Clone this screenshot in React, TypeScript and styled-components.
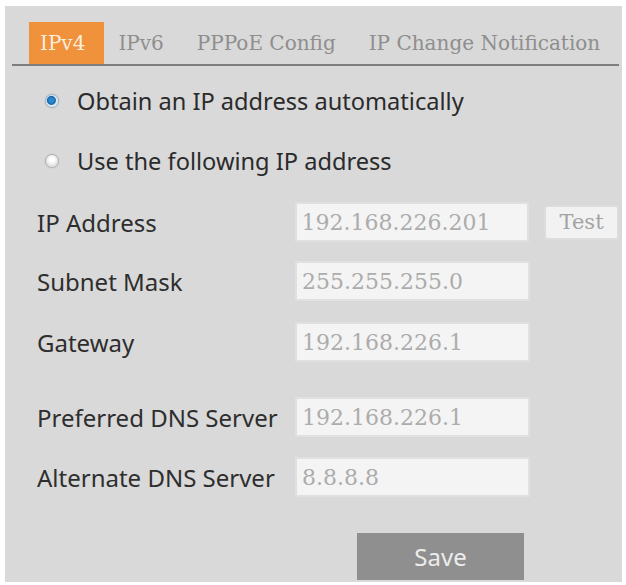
import React from 'react';
import styled, { createGlobalStyle } from 'styled-components';

const GlobalStyle = createGlobalStyle`
  html, body {
    margin: 0;
    padding: 0;
    background: #ffffff;
  }
`;

const Panel = styled.div`
  box-sizing: border-box;
  margin: 6px 0 0 5px;
  width: 617px;
  height: 576px;
  background-color: #d9d9d9;
  padding: 16px 3px 2px 7px;
  display: flex;
  flex-direction: column;
  font-family: 'Noto Sans', 'Open Sans', sans-serif;
  color: #2e2e2e;
`;

const TabBar = styled.div`
  display: flex;
  flex-direction: row;
  align-items: stretch;
  height: 42px;
  padding-left: 17px;
  border-bottom: 2px solid #7d7d7d;
`;

const Tab = styled.div<{ $active?: boolean }>`
  display: flex;
  align-items: center;
  padding: ${p => (p.$active ? '0 19px 0 11px' : '0')};
  margin-right: ${p => (p.$active ? '14px' : '33px')};
  background-color: ${p => (p.$active ? '#f0913b' : 'transparent')};
  color: ${p => (p.$active ? '#fbeedd' : '#8e8e8e')};
  font-family: 'DejaVu Serif', 'Liberation Serif', serif;
  font-size: 20px;
  white-space: nowrap;
  cursor: pointer;
`;

const RadioGroup = styled.div`
  display: flex;
  flex-direction: column;
  gap: 32px;
  padding: 21px 0 0 33px;
`;

const RadioRow = styled.label`
  display: flex;
  flex-direction: row;
  align-items: center;
  height: 28px;
  font-size: 23.6px;
  color: #2b2b2b;
`;

const RadioDot = styled.span<{ $checked?: boolean }>`
  box-sizing: border-box;
  width: 14px;
  height: 14px;
  border-radius: 50%;
  margin-right: 18px;
  border: 1px solid ${p => (p.$checked ? '#9fb3c4' : '#b5b5b5')};
  background: ${p =>
    p.$checked
      ? 'radial-gradient(circle at 45% 45%, #2a8ad0 0 2px, #1a64a8 4px, #dfe8ef 5px)'
      : 'radial-gradient(circle at 50% 40%, #ffffff 0 2px, #e3e3e3 6px)'};
  box-shadow: 0 0 1px #9a9a9a;
`;

const Form = styled.div`
  display: flex;
  flex-direction: column;
  padding: 27px 0 0 25px;
`;

const Row = styled.div<{ $gap: number }>`
  display: flex;
  flex-direction: row;
  align-items: center;
  height: 40px;
  margin-bottom: ${p => p.$gap}px;
`;

const Label = styled.span`
  width: 258px;
  font-size: 24px;
  color: #2e2e2e;
`;

const Field = styled.div`
  box-sizing: border-box;
  width: 235px;
  height: 40px;
  background-color: #f4f4f4;
  border: 2px solid #e0e0e0;
  display: flex;
  align-items: center;
  padding-left: 5px;
  font-family: 'DejaVu Serif', 'Liberation Serif', serif;
  font-size: 22px;
  color: #acacac;
`;

const TestButton = styled.button`
  box-sizing: border-box;
  margin-left: 15px;
  width: 75px;
  height: 35px;
  background-color: #f2f2f2;
  border: 2px solid #dcdcdc;
  border-radius: 3px;
  font-family: 'DejaVu Serif', 'Liberation Serif', serif;
  font-size: 21px;
  color: #a3a3a3;
  padding: 0;
`;

const Footer = styled.div`
  display: flex;
  flex-direction: row;
  margin-top: auto;
  padding-left: 345px;
`;

const SaveButton = styled.button`
  width: 167px;
  height: 47px;
  background-color: #8f8f8f;
  border: none;
  font-family: 'Noto Sans', 'Open Sans', sans-serif;
  font-size: 24px;
  color: #ececec;
  padding: 0;
`;

const fields = [
  { label: 'IP Address', value: '192.168.226.201', test: true, gap: 19 },
  { label: 'Subnet Mask', value: '255.255.255.0', gap: 21 },
  { label: 'Gateway', value: '192.168.226.1', gap: 35 },
  { label: 'Preferred DNS Server', value: '192.168.226.1', gap: 20 },
  { label: 'Alternate DNS Server', value: '8.8.8.8', gap: 0 },
];

const App = () => {
  return (
    <>
      <GlobalStyle />
      <Panel>
        <TabBar>
          <Tab $active>IPv4</Tab>
          <Tab>IPv6</Tab>
          <Tab>PPPoE Config</Tab>
          <Tab>IP Change Notification</Tab>
        </TabBar>
        <RadioGroup>
          <RadioRow>
            <RadioDot $checked />
            Obtain an IP address automatically
          </RadioRow>
          <RadioRow>
            <RadioDot />
            Use the following IP address
          </RadioRow>
        </RadioGroup>
        <Form>
          {fields.map(f => (
            <Row key={f.label} $gap={f.gap}>
              <Label>{f.label}</Label>
              <Field>{f.value}</Field>
              {f.test && <TestButton>Test</TestButton>}
            </Row>
          ))}
        </Form>
        <Footer>
          <SaveButton>Save</SaveButton>
        </Footer>
      </Panel>
    </>
  );
};

export default App;
